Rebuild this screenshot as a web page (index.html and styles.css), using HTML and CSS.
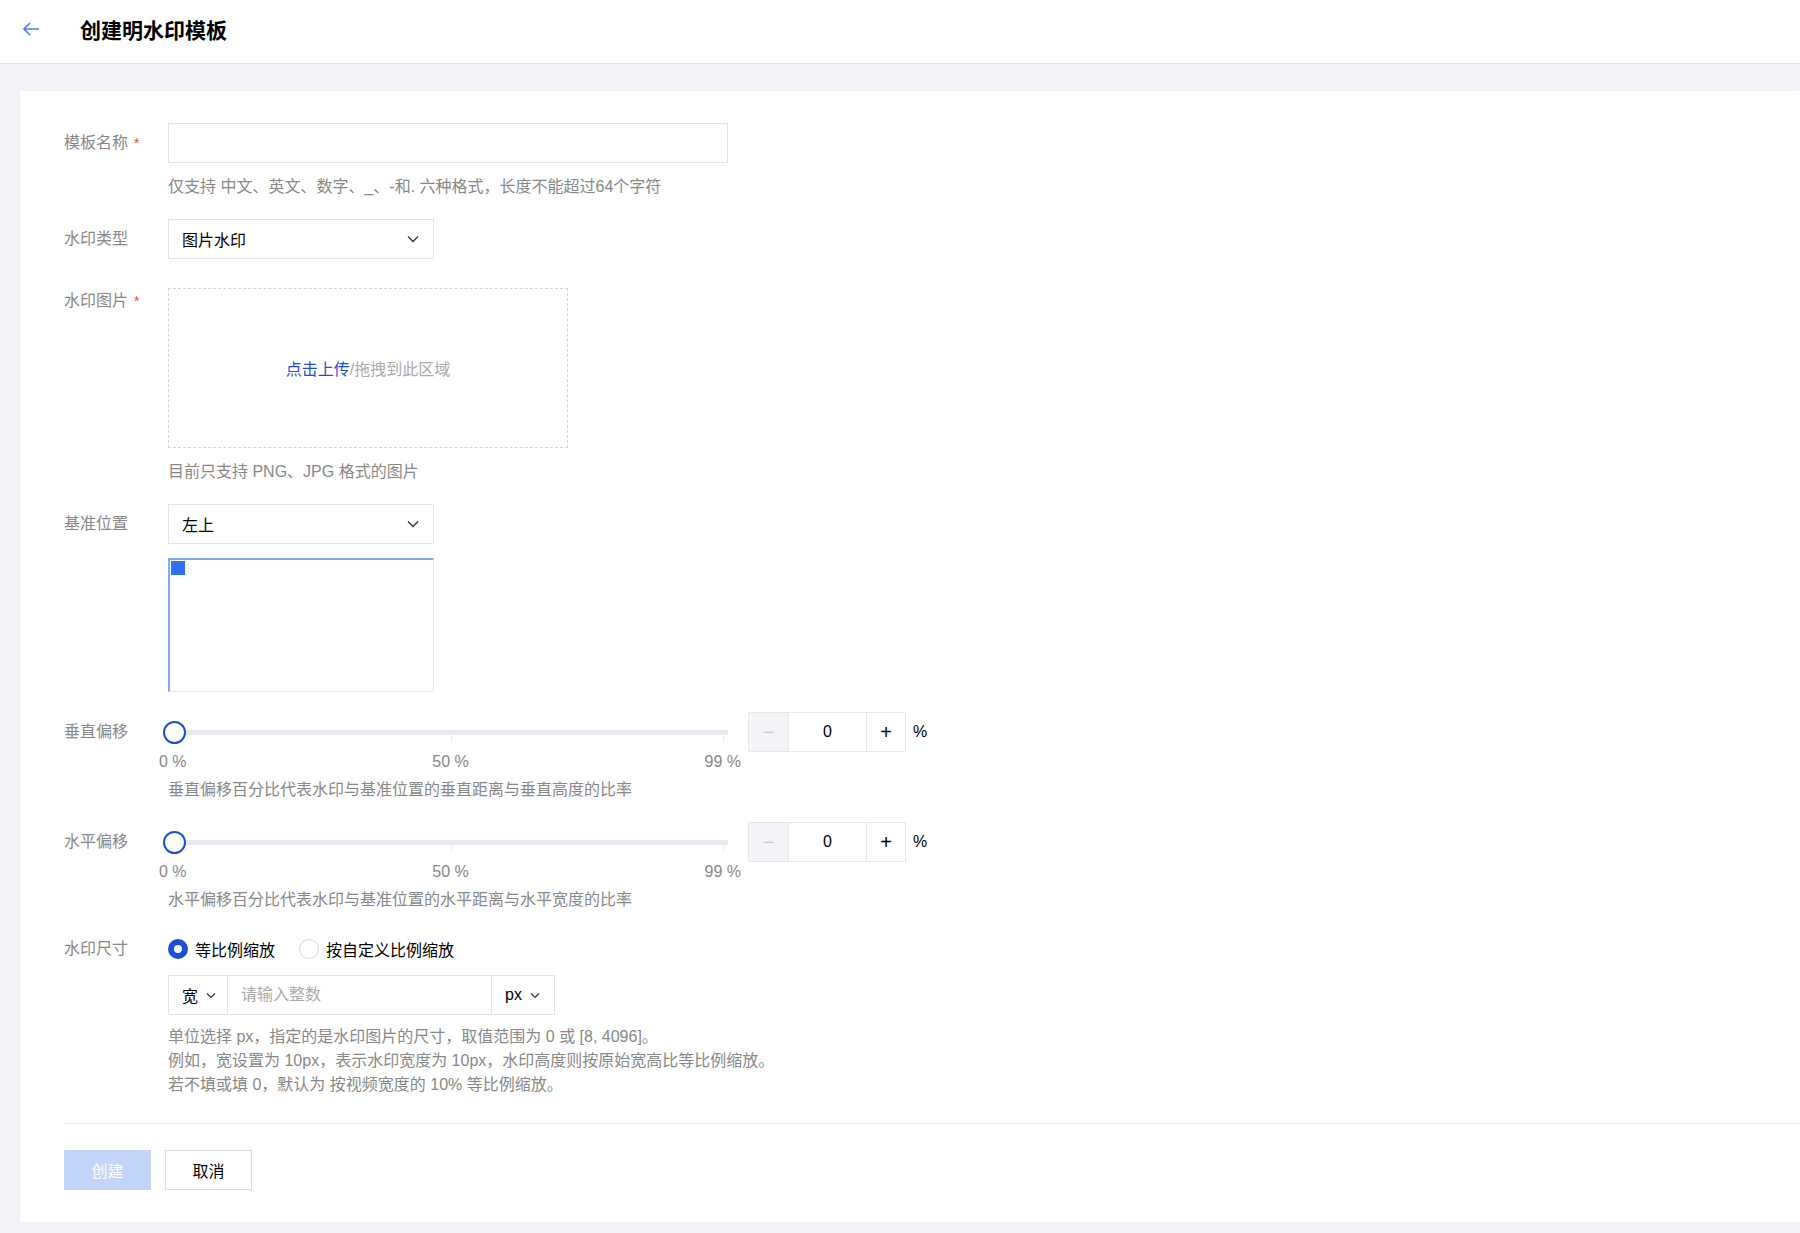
FILE: index.html
```html
<!DOCTYPE html>
<html lang="zh-CN">
<head>
    <meta charset="UTF-8">
    <meta name="viewport" content="width=device-width, initial-scale=1.0">
    <title>创建明水印模板</title>
    <link rel="stylesheet" href="styles.css">
</head>
<body>
    <header class="top-bar">
        <a class="back" href="#">
            <svg width="18" height="14" viewBox="0 0 18 14"><path d="M17 7H2M8 1L2 7l6 6" fill="none" stroke="#4a7cf7" stroke-width="1.6"/></svg>
        </a>
        <h1>创建明水印模板</h1>
    </header>

    <div class="card">
        <form class="form">
            <div class="form-item">
                <label class="form-label">模板名称<span class="req">*</span></label>
                <div class="form-control">
                    <input type="text" class="text-input">
                    <p class="help">仅支持 中文、英文、数字、_、-和. 六种格式，长度不能超过64个字符</p>
                </div>
            </div>

            <div class="form-item spaced">
                <label class="form-label">水印类型</label>
                <div class="form-control">
                    <div class="select">
                        <span>图片水印</span>
                        <svg width="12" height="8" viewBox="0 0 12 8"><path d="M1 1.5l5 5 5-5" fill="none" stroke="#333" stroke-width="1.3"/></svg>
                    </div>
                </div>
            </div>

            <div class="form-item">
                <label class="form-label top">水印图片<span class="req">*</span></label>
                <div class="form-control">
                    <div class="upload"><a href="#">点击上传</a>/拖拽到此区域</div>
                    <p class="help">目前只支持 PNG、JPG 格式的图片</p>
                </div>
            </div>

            <div class="form-item">
                <label class="form-label">基准位置</label>
                <div class="form-control">
                    <div class="select">
                        <span>左上</span>
                        <svg width="12" height="8" viewBox="0 0 12 8"><path d="M1 1.5l5 5 5-5" fill="none" stroke="#333" stroke-width="1.3"/></svg>
                    </div>
                    <div class="position-box"><span class="anchor"></span></div>
                </div>
            </div>

            <div class="form-item">
                <label class="form-label">垂直偏移</label>
                <div class="form-control">
                    <div class="slider-row">
                        <div class="slider-wrap">
                            <div class="slider">
                                <span class="track"></span>
                                <span class="tick mid"></span>
                                <span class="tick end"></span>
                                <span class="handle"></span>
                            </div>
                            <div class="marks"><span>0 %</span><span>50 %</span><span>99 %</span></div>
                        </div>
                        <div class="stepper">
                            <span class="step minus">−</span>
                            <span class="value">0</span>
                            <span class="step plus">+</span>
                        </div>
                        <span class="unit">%</span>
                    </div>
                    <p class="help near">垂直偏移百分比代表水印与基准位置的垂直距离与垂直高度的比率</p>
                </div>
            </div>

            <div class="form-item">
                <label class="form-label">水平偏移</label>
                <div class="form-control">
                    <div class="slider-row">
                        <div class="slider-wrap">
                            <div class="slider">
                                <span class="track"></span>
                                <span class="tick mid"></span>
                                <span class="tick end"></span>
                                <span class="handle"></span>
                            </div>
                            <div class="marks"><span>0 %</span><span>50 %</span><span>99 %</span></div>
                        </div>
                        <div class="stepper">
                            <span class="step minus">−</span>
                            <span class="value">0</span>
                            <span class="step plus">+</span>
                        </div>
                        <span class="unit">%</span>
                    </div>
                    <p class="help near">水平偏移百分比代表水印与基准位置的水平距离与水平宽度的比率</p>
                </div>
            </div>

            <div class="form-item last">
                <label class="form-label radio-label">水印尺寸</label>
                <div class="form-control">
                    <div class="radios">
                        <label class="radio checked"><span class="dot"></span>等比例缩放</label>
                        <label class="radio"><span class="dot"></span>按自定义比例缩放</label>
                    </div>
                    <div class="input-group">
                        <span class="addon side">宽<svg width="10" height="7" viewBox="0 0 10 7"><path d="M1 1.5l4 4 4-4" fill="none" stroke="#333" stroke-width="1.2"/></svg></span>
                        <input type="text" placeholder="请输入整数">
                        <span class="addon unit-pick">px<svg width="10" height="7" viewBox="0 0 10 7"><path d="M1 1.5l4 4 4-4" fill="none" stroke="#333" stroke-width="1.2"/></svg></span>
                    </div>
                    <p class="help lines">单位选择 px，指定的是水印图片的尺寸，取值范围为 0 或 [8, 4096]。<br>例如，宽设置为 10px，表示水印宽度为 10px，水印高度则按原始宽高比等比例缩放。<br>若不填或填 0，默认为 按视频宽度的 10% 等比例缩放。</p>
                </div>
            </div>
        </form>

        <div class="footer">
            <button type="button" class="btn primary" disabled>创建</button>
            <button type="button" class="btn">取消</button>
        </div>
    </div>
</body>
</html>
```

FILE: styles.css
```css
* {
    box-sizing: border-box;
}
body {
    margin: 0;
    background: #f2f3f7;
    font-family: "Liberation Sans", "Noto Sans CJK SC", sans-serif;
    font-size: 16px;
    color: #000;
    overflow: hidden;
}
.top-bar {
    height: 64px;
    background: #fff;
    border-bottom: 1px solid #e3e4e8;
    display: flex;
    align-items: center;
    padding-left: 22px;
}
.back {
    display: flex;
    margin-top: -6px;
}
.top-bar h1 {
    margin: -6px 0 0 40px;
    font-size: 21px;
    font-weight: bold;
}
.card {
    background: #fff;
    margin: 27px 0 0 20px;
    padding: 32px 0 32px 44px;
    box-shadow: 0 2px 4px rgba(0, 0, 0, 0.04);
}
.form-item {
    display: flex;
    margin-bottom: 20px;
}
.form-item.spaced {
    margin-bottom: 29px;
}
.form-item.last {
    margin-bottom: 26px;
}
.form-label {
    width: 104px;
    flex: none;
    line-height: 40px;
    color: #888;
}
.form-label.top {
    line-height: 26px;
}
.form-label.radio-label {
    line-height: 34px;
}
.req {
    color: #e54545;
    margin-left: 6px;
    font-size: 14px;
}
.form-control {
    flex: 1;
}
.text-input {
    display: block;
    width: 560px;
    height: 40px;
    border: 1px solid #e3e4e8;
    font-size: 16px;
    padding: 0 14px;
}
.help {
    margin: 12px 0 0;
    line-height: 24px;
    color: #888;
}
.help.near {
    margin-top: 6px;
}
.help.lines {
    margin-top: 10px;
}
.select {
    width: 266px;
    height: 40px;
    border: 1px solid #e3e4e8;
    display: flex;
    align-items: center;
    justify-content: space-between;
    padding: 0 14px 0 13px;
    color: #000;
}
.upload {
    width: 400px;
    height: 160px;
    border: 1px dashed #d3d4d8;
    display: flex;
    align-items: center;
    justify-content: center;
    color: #aaa;
}
.upload a {
    color: #1b4fd4;
    text-decoration: none;
}
.position-box {
    position: relative;
    width: 266px;
    height: 134px;
    margin-top: 14px;
    border: 1px solid #e6e7eb;
    border-top: 2px solid #82aaf2;
    border-left: 2px solid #82aaf2;
}
.anchor {
    position: absolute;
    left: 1px;
    top: 1px;
    width: 14px;
    height: 14px;
    background: #2f6ff2;
}
.slider-row {
    display: flex;
    align-items: flex-start;
}
.slider-wrap {
    width: 560px;
}
.slider {
    position: relative;
    height: 40px;
}
.track {
    position: absolute;
    left: 0;
    right: 0;
    top: 18px;
    height: 5px;
    background: #e8e9ef;
}
.tick {
    position: absolute;
    top: 23px;
    width: 1px;
    height: 7px;
    background: #e8e9ef;
}
.tick.mid {
    left: 283px;
}
.tick.end {
    left: 555px;
}
.handle {
    position: absolute;
    left: -5px;
    top: 9px;
    width: 23px;
    height: 23px;
    border: 2.5px solid #1b4fd4;
    border-radius: 50%;
    background: #fff;
}
.marks {
    display: flex;
    justify-content: space-between;
    margin: 0 -13px 0 -9px;
    line-height: 20px;
    color: #888;
}
.marks span:nth-child(2) {
    margin-left: 10px;
}
.stepper {
    display: flex;
    margin-left: 20px;
    height: 40px;
    border: 1px solid #e6e7eb;
}
.step {
    width: 39px;
    display: flex;
    align-items: center;
    justify-content: center;
    font-size: 20px;
}
.step.minus {
    background: #f3f4f7;
    color: #c5c6cc;
}
.step.plus {
    border-left: 1px solid #e6e7eb;
}
.value {
    width: 78px;
    display: flex;
    align-items: center;
    justify-content: center;
    border-left: 1px solid #e6e7eb;
}
.unit {
    line-height: 40px;
    margin-left: 7px;
}
.radios {
    display: flex;
    height: 34px;
    align-items: center;
    gap: 24px;
}
.radio {
    display: flex;
    align-items: center;
    gap: 7px;
}
.dot {
    width: 20px;
    height: 20px;
    border-radius: 50%;
    border: 1px solid #d6d7dc;
}
.radio.checked .dot {
    border: 6px solid #1b4fd4;
}
.input-group {
    display: flex;
    width: 387px;
    height: 40px;
    margin-top: 9px;
    border: 1px solid #e3e4e8;
}
.addon {
    display: flex;
    align-items: center;
    gap: 8px;
}
.addon.side {
    width: 59px;
    padding-left: 13px;
    border-right: 1px solid #e3e4e8;
}
.addon.unit-pick {
    width: 63px;
    padding-left: 13px;
    border-left: 1px solid #e3e4e8;
}
.input-group input {
    flex: 1;
    min-width: 0;
    border: none;
    outline: none;
    font-size: 16px;
    font-family: inherit;
    padding: 0 13px;
}
.input-group input::placeholder {
    color: #aaa;
}
.footer {
    border-top: 1px solid #e6e7eb;
    padding-top: 26px;
    display: flex;
    gap: 14px;
}
.btn {
    width: 87px;
    height: 40px;
    font-size: 16px;
    font-family: inherit;
    background: #fff;
    border: 1px solid #dcdde1;
    color: #000;
}
.btn.primary {
    background: #c2d4f7;
    border-color: #c2d4f7;
    color: #fff;
}
```
